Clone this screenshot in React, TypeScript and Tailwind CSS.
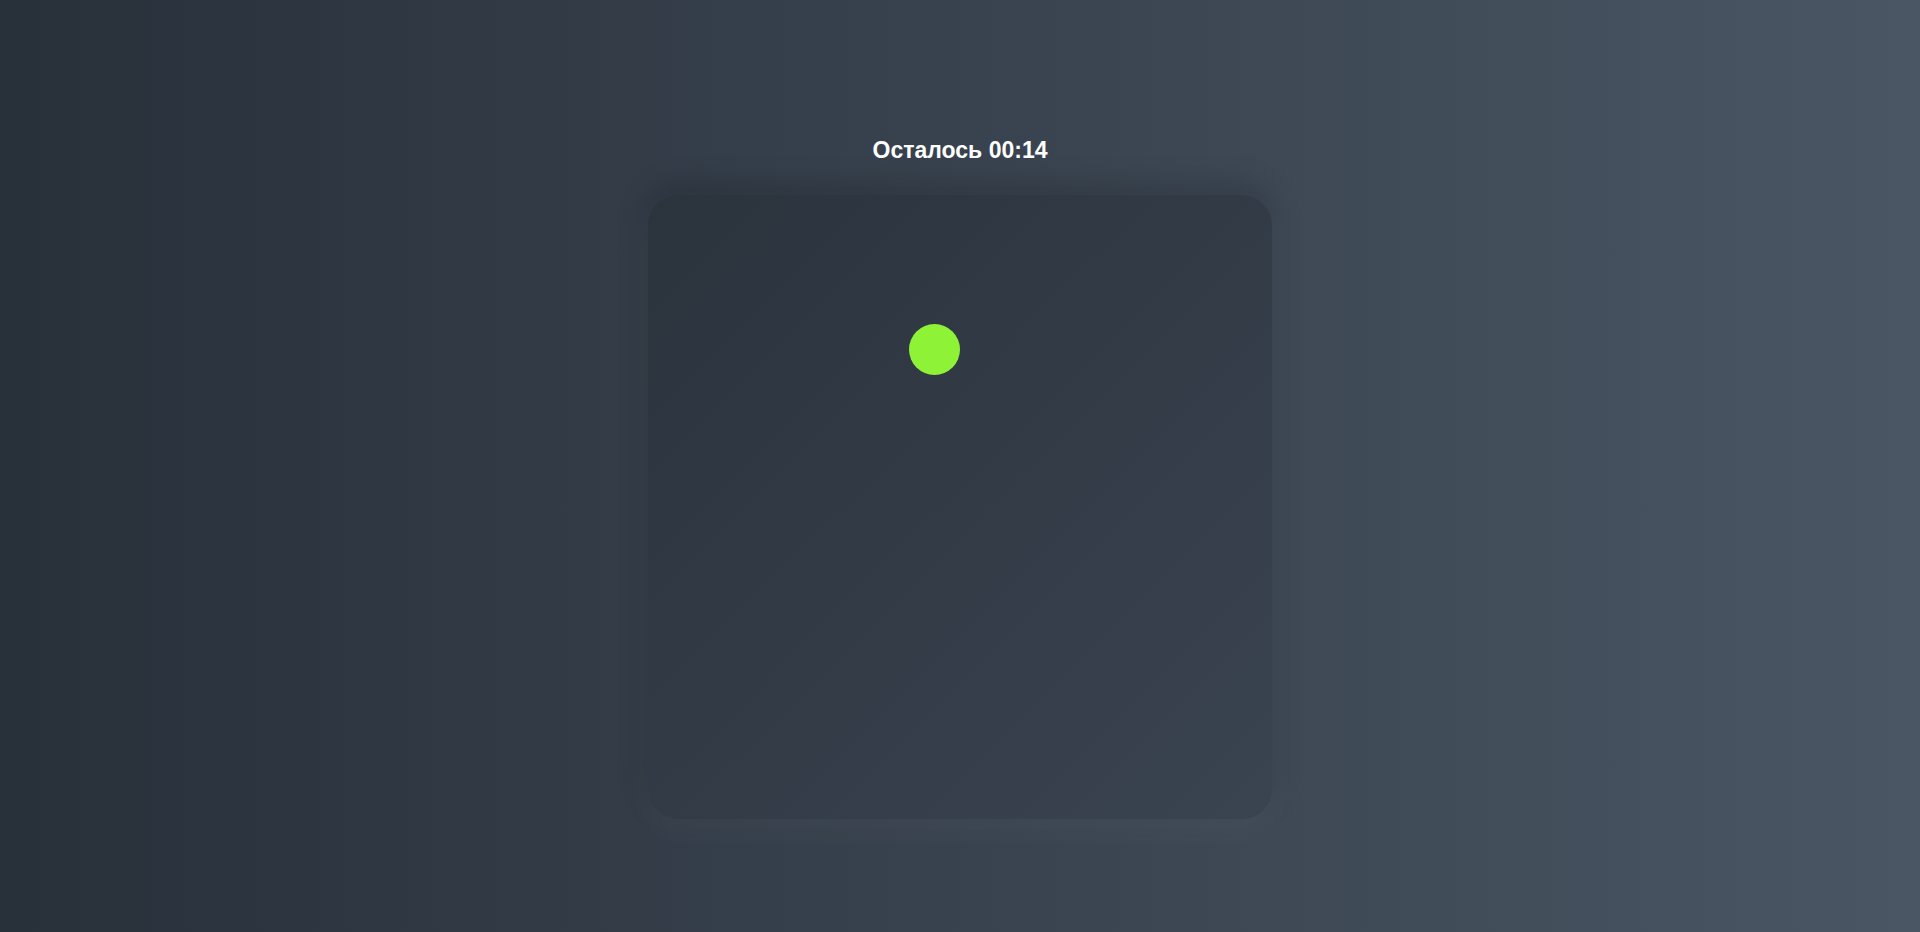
export default function App() {
  return (
    <div className="flex min-h-screen w-full flex-col items-center bg-gradient-to-r from-[#28303a] to-[#4a5664] pt-[136px] font-['Liberation_Sans',Arial,sans-serif]">
      <p className="text-[23px] font-bold leading-7 text-white">Осталось 00:14</p>
      <div className="relative mt-[31px] h-[624px] w-[624px] rounded-[30px] bg-gradient-to-br from-[#2b333d] to-[#3a4350] shadow-[0_-10px_30px_rgba(0,0,0,0.18),0_10px_30px_rgba(255,255,255,0.05)]">
        <div className="absolute left-[261px] top-[129px] h-[51px] w-[51px] rounded-full bg-[#8ef236]" />
      </div>
    </div>
  );
}
